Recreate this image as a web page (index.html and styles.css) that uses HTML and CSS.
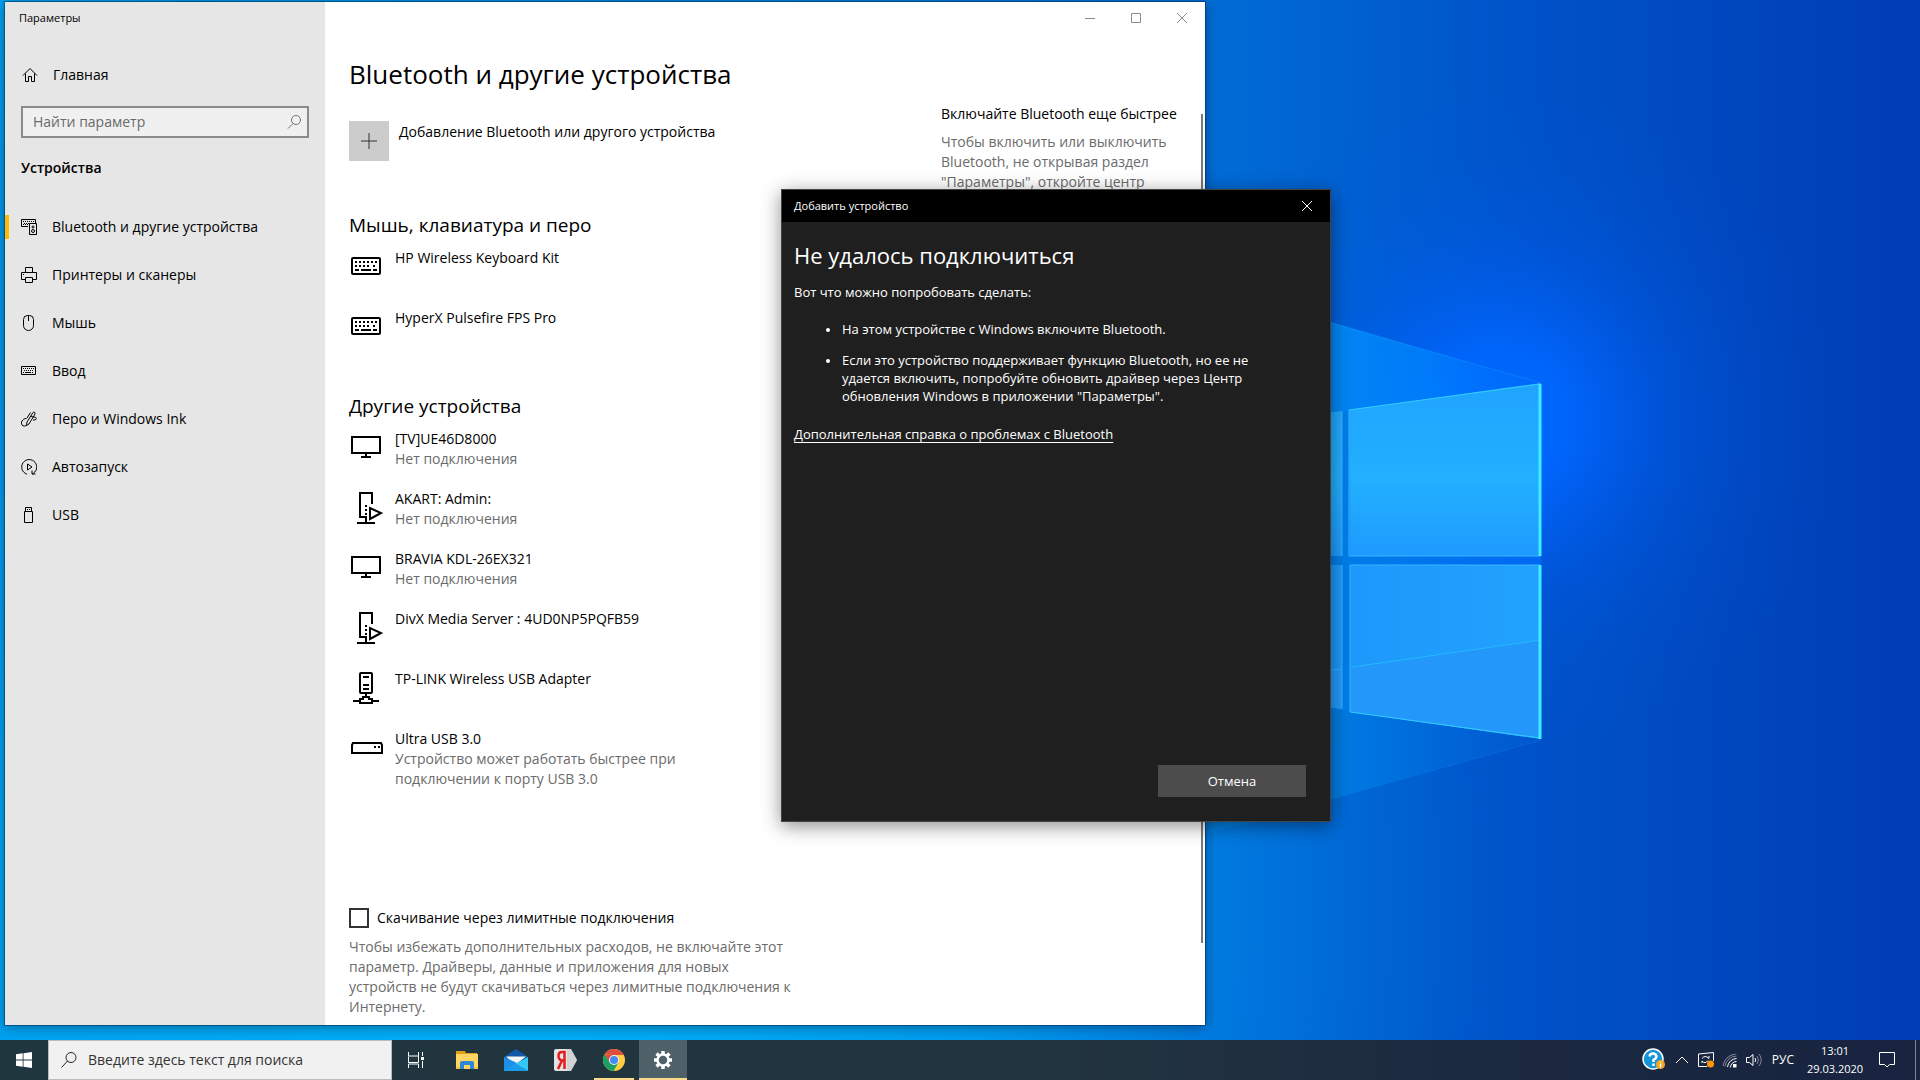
FILE: index.html
```html
<!DOCTYPE html>
<html lang="ru">
<head>
<meta charset="utf-8">
<title>Параметры</title>
<meta name="viewport" content="width=device-width, initial-scale=1">
<link rel="stylesheet" href="styles.css">
</head>
<body class="desktop">

<svg class="wallpaper" viewBox="0 0 1920 1080" preserveAspectRatio="xMidYMid slice" aria-hidden="true">
  <defs>
    <linearGradient id="sky" x1="0" y1="0" x2="1920" y2="0" gradientUnits="userSpaceOnUse">
      <stop offset="0" stop-color="#009fec"/>
      <stop offset=".3" stop-color="#008ce4"/>
      <stop offset=".63" stop-color="#006cd6"/>
      <stop offset=".8" stop-color="#0052c8"/>
      <stop offset="1" stop-color="#003cb4"/>
    </linearGradient>
    <radialGradient id="lowleft" cx="500" cy="900" r="1000" gradientUnits="userSpaceOnUse">
      <stop offset="0" stop-color="#00b4fa"/>
      <stop offset=".5" stop-color="#00a4f4" stop-opacity=".8"/>
      <stop offset="1" stop-color="#0070e0" stop-opacity="0"/>
    </radialGradient>
    <radialGradient id="glow" cx="1500" cy="420" r="340" gradientUnits="userSpaceOnUse">
      <stop offset="0" stop-color="#006cff"/>
      <stop offset=".22" stop-color="#0066ff" stop-opacity=".9"/>
      <stop offset=".5" stop-color="#005cf0" stop-opacity=".4"/>
      <stop offset=".75" stop-color="#0058e0" stop-opacity=".15"/>
      <stop offset="1" stop-color="#0054d8" stop-opacity="0"/>
    </radialGradient>
    <linearGradient id="beam" x1="1320" y1="0" x2="1541" y2="0" gradientUnits="userSpaceOnUse">
      <stop offset="0" stop-color="#0088f4"/>
      <stop offset=".5" stop-color="#0084fc" stop-opacity=".7"/>
      <stop offset="1" stop-color="#0070ff" stop-opacity=".1"/>
    </linearGradient>
    <linearGradient id="beamlow" x1="1320" y1="0" x2="1541" y2="0" gradientUnits="userSpaceOnUse">
      <stop offset="0" stop-color="#0082e6" stop-opacity=".8"/>
      <stop offset="1" stop-color="#0068e0" stop-opacity=".2"/>
    </linearGradient>
    <linearGradient id="gap" x1="1340" y1="0" x2="1541" y2="0" gradientUnits="userSpaceOnUse">
      <stop offset="0" stop-color="#007ee8"/>
      <stop offset="1" stop-color="#0068f4"/>
    </linearGradient>
    <linearGradient id="paneTop" x1="0" y1="383" x2="0" y2="557" gradientUnits="userSpaceOnUse">
      <stop offset="0" stop-color="#20a4ff"/>
      <stop offset=".55" stop-color="#22b0ff"/>
      <stop offset="1" stop-color="#1e9aff"/>
    </linearGradient>
    <linearGradient id="paneLow" x1="1345" y1="0" x2="1541" y2="0" gradientUnits="userSpaceOnUse">
      <stop offset="0" stop-color="#1c98fa"/>
      <stop offset="1" stop-color="#22a2ff"/>
    </linearGradient>
  </defs>
  <rect width="1920" height="1080" fill="url(#sky)"/>
  <rect width="1920" height="1080" fill="url(#lowleft)"/>
  <rect width="1920" height="1080" fill="url(#glow)"/>
  <path d="M1200 284 1541 383V470H1200z" fill="url(#beam)"/>
  <path d="M1200 560H1541V740L1200 836z" fill="url(#beamlow)"/>
  <path d="M1330 323 1541 383" stroke="#1898f8" stroke-opacity=".4"/>
  <path d="M1200 836 1541 740" stroke="#1088f0" stroke-opacity=".3"/>
  <path d="M1320 415 1541 386V737L1320 707z" fill="url(#gap)"/>
  <path d="M1320 413 1342 411V556H1320zM1349 410 1541 383V556H1350z" fill="url(#paneTop)"/>
  <path d="M1320 565H1342V709L1320 706zM1350 565H1541V739L1350 712z" fill="url(#paneLow)"/>
  <path d="M1350 667 1541 640V739L1350 712zM1320 671 1342 669V709L1320 706z" fill="#2498fa"/>
  <path d="M1352 667 1541 640M1320 671 1342 669" stroke="#22b8ff" fill="none"/>
  <path d="M1349 410V556H1540M1350 712V565H1540M1342 411V556M1342 565V709" stroke="#3cb4ff" fill="none"/>
  <path d="M1349 410 1540 384M1540 738 1350 712" stroke="#34ccff" fill="none"/>
  <path d="M1540 384V556M1540 565V739" stroke="#40ecff" stroke-width="3"/>
</svg>

<main class="workspace">

  <section class="window settings" aria-label="Параметры">
    <aside class="sidebar">
      <div class="sidebar-caption">Параметры</div>
      <a class="nav-link home" href="#home">
        <svg class="icon" viewBox="0 0 16 16"><path d="M1 8.500 8 1.500l7 7M3.500 6.500v8h3v-5h3v5h3v-8"/></svg>
        <span>Главная</span>
      </a>
      <div class="find">
        <input class="find-input" type="text" placeholder="Найти параметр" aria-label="Найти параметр">
        <svg class="find-icon" viewBox="0 0 16 16"><circle cx="10" cy="6" r="4.500"/><path d="M7 9.500 2 14.500"/></svg>
      </div>
      <h2 class="sidebar-title">Устройства</h2>
      <nav class="nav">
        <a class="nav-link active" href="#bluetooth">
          <svg class="icon" viewBox="0 0 16 16"><path d="M7 7.500H.5v-7h14V4M8.500 4.500h7v11h-7z"/><path stroke-dasharray="1 1" d="M2 2.500h11M3 4.500h5M2 5.500h5"/><circle cx="12" cy="8" r="1"/><circle cx="12" cy="12" r="1.500"/></svg>
          <span>Bluetooth и другие устройства</span>
        </a>
        <a class="nav-link" href="#printers">
          <svg class="icon" viewBox="0 0 16 16"><path d="M4.500 5.500v-5h7v5M4.500 12.500h-4v-7h15v7h-4M4.500 10.500h7v5h-7zM2 7.500h1"/></svg>
          <span>Принтеры и сканеры</span>
        </a>
        <a class="nav-link" href="#mouse">
          <svg class="icon" viewBox="0 0 16 16"><path d="M2.500 4.500a4 4 0 0 1 4-4h2a4 4 0 0 1 4 4v6a5 5 0 0 1-10 0zM7.500 1v5"/></svg>
          <span>Мышь</span>
        </a>
        <a class="nav-link" href="#typing">
          <svg class="icon" viewBox="0 0 16 16"><path d="M.5 3.500h14v8H.5z"/><path stroke-dasharray="1 1" d="M2 5.500h11M3 7.500h10M2 9.500h3M11 9.500h2"/><path d="M5 9.500h5"/></svg>
          <span>Ввод</span>
        </a>
        <a class="nav-link" href="#pen">
          <svg class="icon" viewBox="0 0 16 16"><path d="M5.500 14.500 6 11l6-9.500c1-1 2.500 0 2 1.500l-6 10zM10 5l2.500 1.500M5.500 7.500C1 7.500-.5 12 1 14c1 1.500 3.500 1 4.500.5M9.500 1.500 6 7M13 6c3 0 3 3 0 3h-1"/></svg>
          <span>Перо и Windows Ink</span>
        </a>
        <a class="nav-link" href="#autoplay">
          <svg class="icon" viewBox="0 0 16 16"><path d="M6 15.200A7.500 7.500 0 1 1 11 15M11 11.500V15h3.500M6.500 5v6l4.500-3z"/></svg>
          <span>Автозапуск</span>
        </a>
        <a class="nav-link" href="#usb">
          <svg class="icon" viewBox="0 0 16 16"><path d="M4.500 4.500v-4h6v4M3.500 4.500h8v11h-8zM6 2.500h1M8 2.500h1"/></svg>
          <span>USB</span>
        </a>
      </nav>
    </aside>

    <div class="content">
      <div class="caption-buttons">
        <button class="caption-button" type="button" aria-label="Свернуть"><svg viewBox="0 0 10 10"><path d="M0 5.500h10"/></svg></button>
        <button class="caption-button" type="button" aria-label="Развернуть"><svg viewBox="0 0 10 10"><path d="M.5.5h9v9h-9z"/></svg></button>
        <button class="caption-button" type="button" aria-label="Закрыть"><svg viewBox="0 0 10 10"><path d="M0 0l10 10M10 0 0 10"/></svg></button>
      </div>
      <h1 class="page-title">Bluetooth и другие устройства</h1>

      <div class="columns">
        <div class="primary">
          <button class="add-device" type="button">
            <span class="add-tile"><svg viewBox="0 0 16 16"><path d="M0 8h16M8 0v16"/></svg></span>
            <span>Добавление Bluetooth или другого устройства</span>
          </button>

          <h2 class="group-title">Мышь, клавиатура и перо</h2>
          <ul class="devices">
            <li class="device">
              <svg class="device-icon" viewBox="0 0 32 32"><rect x="1" y="8" width="28" height="16" rx="1"/><path stroke-dasharray="2 2" d="M4 12h22M4 16h2M8 16h12M22 16h4"/><path d="M4 20h4M10 20h10M22 20h4"/></svg>
              <div>HP Wireless Keyboard Kit</div>
            </li>
            <li class="device">
              <svg class="device-icon" viewBox="0 0 32 32"><rect x="1" y="8" width="28" height="16" rx="1"/><path stroke-dasharray="2 2" d="M4 12h22M4 16h2M8 16h12M22 16h4"/><path d="M4 20h4M10 20h10M22 20h4"/></svg>
              <div>HyperX Pulsefire FPS Pro</div>
            </li>
          </ul>

          <h2 class="group-title">Другие устройства</h2>
          <ul class="devices">
            <li class="device">
              <svg class="device-icon" viewBox="0 0 32 32"><path d="M1 6h28v16H1zM15 22v4M10 26h10"/></svg>
              <div>[TV]UE46D8000<p class="note">Нет подключения</p></div>
            </li>
            <li class="device">
              <svg class="device-icon" viewBox="0 0 32 32"><path d="M15 26H9V2h12v11M15 25v6M6 32h18"/><path stroke-dasharray="2 2" d="M15 14v10"/><path class="solid" d="M19 17v11l11-6z"/></svg>
              <div>AKART: Admin:<p class="note">Нет подключения</p></div>
            </li>
            <li class="device">
              <svg class="device-icon" viewBox="0 0 32 32"><path d="M1 6h28v16H1zM15 22v4M10 26h10"/></svg>
              <div>BRAVIA KDL-26EX321<p class="note">Нет подключения</p></div>
            </li>
            <li class="device">
              <svg class="device-icon" viewBox="0 0 32 32"><path d="M15 26H9V2h12v11M15 25v6M6 32h18"/><path stroke-dasharray="2 2" d="M15 14v10"/><path class="solid" d="M19 17v11l11-6z"/></svg>
              <div>DivX Media Server : 4UD0NP5PQFB59</div>
            </li>
            <li class="device">
              <svg class="device-icon" viewBox="0 0 32 32"><rect x="9" y="2" width="12" height="20" rx="1"/><path d="M12 6h6M12 14h6M12 18h6M15 22v4M2 30h7M21 30h7M9 28h3v-2h6v2h3v4H9z"/></svg>
              <div>TP-LINK Wireless USB Adapter</div>
            </li>
            <li class="device">
              <svg class="device-icon" viewBox="0 0 32 32"><path d="M2 12h28l1 2v8H1v-8zM23 16h2M27 16h2"/></svg>
              <div>Ultra USB 3.0<p class="note">Устройство может работать быстрее при подключении к порту USB 3.0</p></div>
            </li>
          </ul>

          <div class="metered">
            <label class="check"><input class="check-box" type="checkbox"><span>Скачивание через лимитные подключения</span></label>
            <p class="note">Чтобы избежать дополнительных расходов, не включайте этот параметр. Драйверы, данные и приложения для новых устройств не будут скачиваться через лимитные подключения к Интернету.</p>
          </div>
        </div>

        <aside class="tips">
          <h3 class="tips-title">Включайте Bluetooth еще быстрее</h3>
          <p class="note">Чтобы включить или выключить Bluetooth, не открывая раздел "Параметры", откройте центр</p>
        </aside>
        <div class="scroll-thumb"></div>
      </div>
    </div>
  </section>

  <section class="window dialog" role="dialog" aria-labelledby="dialog-heading">
    <header class="dialog-bar">
      <span>Добавить устройство</span>
      <button class="dialog-close" type="button" aria-label="Закрыть"><svg viewBox="0 0 10 10"><path d="M0 0l10 10M10 0 0 10"/></svg></button>
    </header>
    <div class="dialog-body">
      <h2 class="dialog-title" id="dialog-heading">Не удалось подключиться</h2>
      <p class="dialog-lead">Вот что можно попробовать сделать:</p>
      <ul class="hints">
        <li class="hint">На этом устройстве с Windows включите Bluetooth.</li>
        <li class="hint">Если это устройство поддерживает функцию Bluetooth, но ее не удается включить, попробуйте обновить драйвер через Центр обновления Windows в приложении "Параметры".</li>
      </ul>
      <a class="help-link" href="#help">Дополнительная справка о проблемах с Bluetooth</a>
      <button class="cancel" type="button">Отмена</button>
    </div>
  </section>
</main>

<footer class="taskbar">
  <button class="task start" type="button" aria-label="Пуск"><svg viewBox="0 0 16 16"><path fill="#fff" d="M0 2.300 6.700 1.300v6.300H0zM7.500 1.200 16 0v7.600H7.500zM0 8.400h6.700v6.300L0 13.700zM7.500 8.400H16V16l-8.500-1.200z"/></svg></button>
  <div class="task-search">
    <svg class="task-search-icon" viewBox="0 0 16 16"><circle cx="10" cy="5.500" r="5"/><path d="M6.500 9 .5 15.500"/></svg>
    <input class="task-search-input" type="text" placeholder="Введите здесь текст для поиска" aria-label="Поиск">
  </div>
  <button class="task" type="button" aria-label="Представление задач"><svg viewBox="0 0 24 24"><path class="line" d="M4.500 4v4h10V4M4.500 20v-4h10v4M4.500 10v4.500h10V8M4.500 8.500v6M18.500 4v4M18.500 13v7"/><path fill="#fff" d="M17 9h3v3h-3z"/></svg></button>
  <div class="apps">
    <button class="task" type="button" aria-label="Проводник"><svg viewBox="0 0 24 24"><path fill="#e09f16" d="M1 3h9l1 2h11v3H1z"/><path fill="#ffd661" d="M1 6h22v15H1z"/><path fill="#2f86d6" d="M5 21v-6q0-2 2-2h10q2 0 2 2v6h-4v-4H9v4z"/><path fill="#f5c342" d="M1 19h4v2H1zM19 19h4v2h-4z"/></svg></button>
    <button class="task" type="button" aria-label="Почта"><svg viewBox="0 0 24 24"><path fill="#0f59a8" d="M0 9 12 1l12 8v5H0z"/><path fill="#f5f5f5" d="M2 8.500h20L11 17z"/><path fill="#1d8fe6" d="M0 9v14h4l9-8z"/><path fill="#35c6f4" d="M24 9v14L11 16z"/><path fill="#1b9cea" d="M0 23 11 15l13 8z"/></svg></button>
    <button class="task" type="button" aria-label="Яндекс"><svg viewBox="0 0 24 24"><path fill="#e2e2e4" d="M3 1h15l6 11-6 11H3q-2 0-2-2V3q0-2 2-2z"/><path fill="#c2c2c6" d="M18 1l6 11-6 11h-4V1z" opacity=".5"/><path fill="none" stroke="#e61b1b" stroke-width="2.500" d="M11.500 21V4H9Q5.500 4 5.500 8q0 4 4 4.500h2M9 12.500 5 21"/></svg></button>
    <button class="task open" type="button" aria-label="Chrome"><svg viewBox="0 0 24 24"><circle cx="12" cy="12" r="11" fill="#ffcd42"/><path fill="#de4d3f" d="M2.500 6.500A11 11 0 0 1 21.800 7H12z"/><path fill="#de4d3f" d="M2.500 6.500 7.500 14l4.500-7z"/><path fill="#1aa15f" d="M2.500 6.500A11 11 0 0 0 11.500 23l5-8.500H8z"/><circle cx="12" cy="12" r="5" fill="#f1f1f1"/><circle cx="12" cy="12" r="4" fill="#4688f1"/></svg></button>
    <button class="task current" type="button" aria-label="Параметры"><svg viewBox="0 0 24 24"><circle cx="12" cy="12" r="5.500" fill="none" stroke="#fff" stroke-width="2.500"/><path fill="none" stroke="#fff" stroke-width="3.500" d="M12 3v3M12 18v3M3 12h3M18 12h3M5.600 5.600l2.200 2.200M16.200 16.200l2.200 2.200M18.400 5.600l-2.200 2.200M7.800 16.200l-2.200 2.200"/></svg></button>
  </div>
  <div class="tray">
    <svg class="tray-help" viewBox="0 0 24 24"><circle cx="11" cy="11" r="10" fill="#1296d8" stroke="#fff" stroke-width="1.500"/><path d="M7.500 8.500Q8 5.500 11 5.500t3.500 3Q14.500 10 11.500 12v2M11.500 15.500v2.500" fill="none" stroke="#fff" stroke-width="2.500"/><circle cx="18.500" cy="16.500" r="4.500" fill="#f5a623"/><path d="M18.500 13.500v1M18.500 15.500v4" stroke="#fff" stroke-width="1.500"/></svg>
    <svg class="tray-icon" viewBox="0 0 16 16"><path class="line" d="M2 11l6-6 6 6"/></svg>
    <svg class="tray-icon" viewBox="0 0 16 16"><path class="line" d="M9 14.500H.5V2L15.500.5V9M4 6.500q3-4 7 0V4M10 8.500q-3 4-6 .5V11"/><circle cx="12.500" cy="12" r="3.500" fill="#ff9800"/></svg>
    <svg class="tray-icon" viewBox="0 0 16 16"><path class="line dim" d="M3 14.500A12 12 0 0 1 14.500 4M1 14A14 14 0 0 1 13.500 2"/><path class="line" d="M5.500 15A9.500 9.500 0 0 1 14.500 6.500M8.500 15.500A6 6 0 0 1 14.500 9.500"/><path fill="#fff" d="M11 12h3.500v3.500H11z"/></svg>
    <svg class="tray-icon" viewBox="0 0 16 16"><path class="line" d="M.5 5.500h3L7 2.500v11l-3.500-3h-3zM9 6q1.500 2 0 4"/><path class="line dim" d="M11 4q3 4 0 8M13 2q4.500 6 0 12"/></svg>
    <span class="language">РУС</span>
    <time class="clock" datetime="2020-03-29T13:01"><span>13:01</span><span>29.03.2020</span></time>
    <button class="action-center" type="button" aria-label="Центр уведомлений"><svg viewBox="0 0 18 18"><path class="line" d="M1.500 1.500h15v12h-5L9 16l-2.500-2.500h-5z"/></svg></button>
  </div>
</footer>
</body>
</html>
```

FILE: styles.css
```css
* {
  box-sizing: border-box;
}

body,
h1,
h2,
h3,
p,
ul {
  margin: 0;
  padding: 0;
}

h1,
h2,
h3 {
  font-weight: 400;
}

ul {
  list-style: none;
}

button,
input {
  font: inherit;
  color: inherit;
  padding: 0;
  border: 0;
  background: none;
  border-radius: 0;
}

a {
  color: inherit;
  text-decoration: none;
}

svg {
  flex: none;
}

.desktop {
  display: flex;
  flex-direction: column;
  height: 100vh;
  overflow: hidden;
  background: #0070d8;
  color: #000;
  font: 14px/20px "Open Sans", "Noto Sans", sans-serif;
}

.wallpaper {
  position: absolute;
  inset: 0;
  width: 100%;
  height: 100%;
  z-index: -1;
}

.workspace {
  position: relative;
  flex: 1;
  min-height: 0;
}

.window {
  position: absolute;
}

/* Settings window */

.settings {
  left: 5px;
  top: 2px;
  bottom: 15px;
  width: 62.5%;
  display: flex;
  overflow: hidden;
  background: #fff;
  outline: 1px solid rgba(0, 40, 80, .5);
  box-shadow: 0 2px 12px rgba(0, 0, 0, .4);
}

.sidebar {
  flex: none;
  width: 320px;
  background: #e6e6e6;
}

.sidebar-caption {
  padding: 6px 14px;
  margin-bottom: 17px;
  font-size: 11px;
}

.nav-link {
  display: flex;
  align-items: center;
  gap: 15px;
  height: 48px;
  padding: 0 16px;
}

.home {
  padding-left: 17px;
}

.active {
  background: linear-gradient(#ffb900, #ffb900) 0 50% / 4px 24px no-repeat;
}

.icon {
  width: 16px;
  height: 16px;
  fill: none;
  stroke: #000;
}

.find {
  position: relative;
  margin: 7px 16px 0;
}

.find-input {
  display: block;
  width: 100%;
  height: 32px;
  padding: 0 36px 2px 10px;
  border: 2px solid #8a8a8a;
  background: #f0f0f0;
}

.find-input::placeholder {
  color: #6a6a6a;
  opacity: 1;
}

.find-icon {
  position: absolute;
  right: 7px;
  top: 8px;
  width: 16px;
  height: 16px;
  fill: none;
  stroke: #707070;
}

.sidebar-title {
  padding: 20px 16px 25px;
  font-size: 14px;
  font-weight: 600;
}

.content {
  flex: 1;
  min-width: 0;
  display: flex;
  flex-direction: column;
  padding-left: 24px;
}

.caption-buttons {
  display: flex;
  justify-content: flex-end;
}

.caption-button {
  display: grid;
  place-items: center;
  width: 46px;
  height: 32px;
}

.caption-button svg,
.dialog-close svg {
  width: 10px;
  height: 10px;
  fill: none;
  stroke: #8a8a8a;
}

.page-title {
  margin: 20px 0 10px;
  font-size: 26px;
  line-height: 40px;
}

.columns {
  flex: 1;
  min-height: 0;
  display: flex;
}

.primary {
  flex: 1;
}

.add-device {
  display: flex;
  align-items: flex-start;
  gap: 10px;
  margin: 17px 0 49px;
  height: 40px;
  line-height: 22px;
  text-align: left;
}

.add-tile {
  display: grid;
  place-items: center;
  width: 40px;
  height: 40px;
  background: #ccc;
}

.add-tile svg {
  width: 16px;
  height: 16px;
  stroke: #333;
  stroke-width: 1;
}

.group-title {
  font-size: 19px;
  line-height: 30px;
}

.devices {
  margin: 8px 0 23px;
}

.device {
  display: flex;
  gap: 12px;
  min-height: 60px;
  padding-left: 2px;
}

.device-icon {
  width: 32px;
  height: 32px;
  margin-top: 2px;
  overflow: visible;
  fill: none;
  stroke: #000;
  stroke-width: 2;
}

.solid {
  fill: #fff;
}

.device > div {
  max-width: 290px;
}

.note {
  color: #6b6b6b;
}

.metered {
  max-width: 450px;
  margin-top: 119px;
}

.check {
  display: flex;
  align-items: center;
  gap: 8px;
  margin-bottom: 9px;
}

.check-box {
  appearance: none;
  width: 20px;
  height: 20px;
  margin: 0;
  border: 2px solid #333;
}

.tips {
  width: 260px;
}

.tips-title {
  margin-bottom: 8px;
  font-size: 14px;
  line-height: 20px;
}

.scroll-thumb {
  width: 2px;
  height: 90%;
  margin: 10px 2px 0 0;
  background: #7a7a7a;
}

/* Add device dialog */

.dialog {
  left: 781px;
  top: 189px;
  width: 550px;
  height: 633px;
  display: flex;
  flex-direction: column;
  border: 1px solid #444;
  background: #1f1f1f;
  color: #fff;
  font-size: 13px;
  line-height: 18px;
  box-shadow: 0 4px 18px rgba(0, 0, 0, .45);
}

.dialog-bar {
  display: flex;
  align-items: center;
  justify-content: space-between;
  height: 32px;
  padding-left: 12px;
  background: #000;
  font-size: 11px;
}

.dialog-close {
  display: grid;
  place-items: center;
  width: 46px;
  height: 32px;
}

.dialog-close svg {
  stroke: #fff;
}

.dialog-body {
  flex: 1;
  display: flex;
  flex-direction: column;
  align-items: flex-start;
  padding: 17px 24px 24px 12px;
}

.dialog-title {
  font-size: 22px;
  line-height: 32px;
}

.dialog-lead {
  margin: 12px 0 19px;
}

.hints {
  display: flex;
  flex-direction: column;
  gap: 13px;
  margin-bottom: 20px;
  padding: 0 40px 0 32px;
}

.hint {
  display: flex;
  gap: 12px;
}

.hint::before {
  content: "";
  flex: none;
  width: 4px;
  height: 4px;
  margin-top: 8px;
  border-radius: 50%;
  background: #fff;
}

.help-link {
  text-decoration: underline;
  text-underline-offset: 3px;
}

.cancel {
  width: 148px;
  height: 32px;
  margin: auto 0 0 auto;
  background: #4c4c4c;
}

/* Taskbar */

.taskbar {
  position: relative;
  display: flex;
  height: 40px;
  background: linear-gradient(90deg, #20363f, #22343f 55%, #1b2840 80%, #182440);
  color: #fff;
}

.task {
  position: relative;
  display: grid;
  place-items: center;
  width: 48px;
  height: 40px;
}

.task svg {
  width: 24px;
  height: 24px;
}

.start svg {
  width: 16px;
  height: 16px;
}

.task-search {
  display: flex;
  align-items: center;
  gap: 11px;
  width: 344px;
  padding-left: 12px;
  border: 1px solid #bbb;
  background: #f1f1f1;
  color: #333;
}

.task-search-icon {
  width: 16px;
  height: 16px;
  fill: none;
  stroke: #222;
  overflow: visible;
}

.task-search-input {
  flex: 1;
  min-width: 0;
}

.task-search-input::placeholder {
  color: #333;
  opacity: 1;
}

.apps {
  display: flex;
  gap: 1px;
  margin-left: 3px;
}

.line {
  fill: none;
  stroke: #fff;
}

.dim {
  stroke-opacity: .45;
}

.open {
  background: linear-gradient(#ffd98a, #ffd98a) 50% 100% / 40px 2px no-repeat;
}

.current {
  background: linear-gradient(#ffd98a, #ffd98a) 0 100% / 100% 2px no-repeat, #4e6068;
}

.tray {
  display: flex;
  align-items: center;
  margin-left: auto;
  gap: 8px;
  font-size: 12px;
  padding-right: 4px;
}

.tray-help {
  width: 24px;
  height: 24px;
}

.tray-icon {
  width: 16px;
  height: 16px;
}

.language {
  margin-left: 2px;
}

.clock {
  display: flex;
  flex-direction: column;
  width: 66px;
  font-size: 11px;
  line-height: 18px;
  text-align: center;
}

.action-center {
  display: grid;
  place-items: center;
  width: 40px;
  height: 40px;
  padding-right: 18px;
  border-right: 1px solid #7c8494;
}

.action-center svg {
  width: 18px;
  height: 18px;
}
```
